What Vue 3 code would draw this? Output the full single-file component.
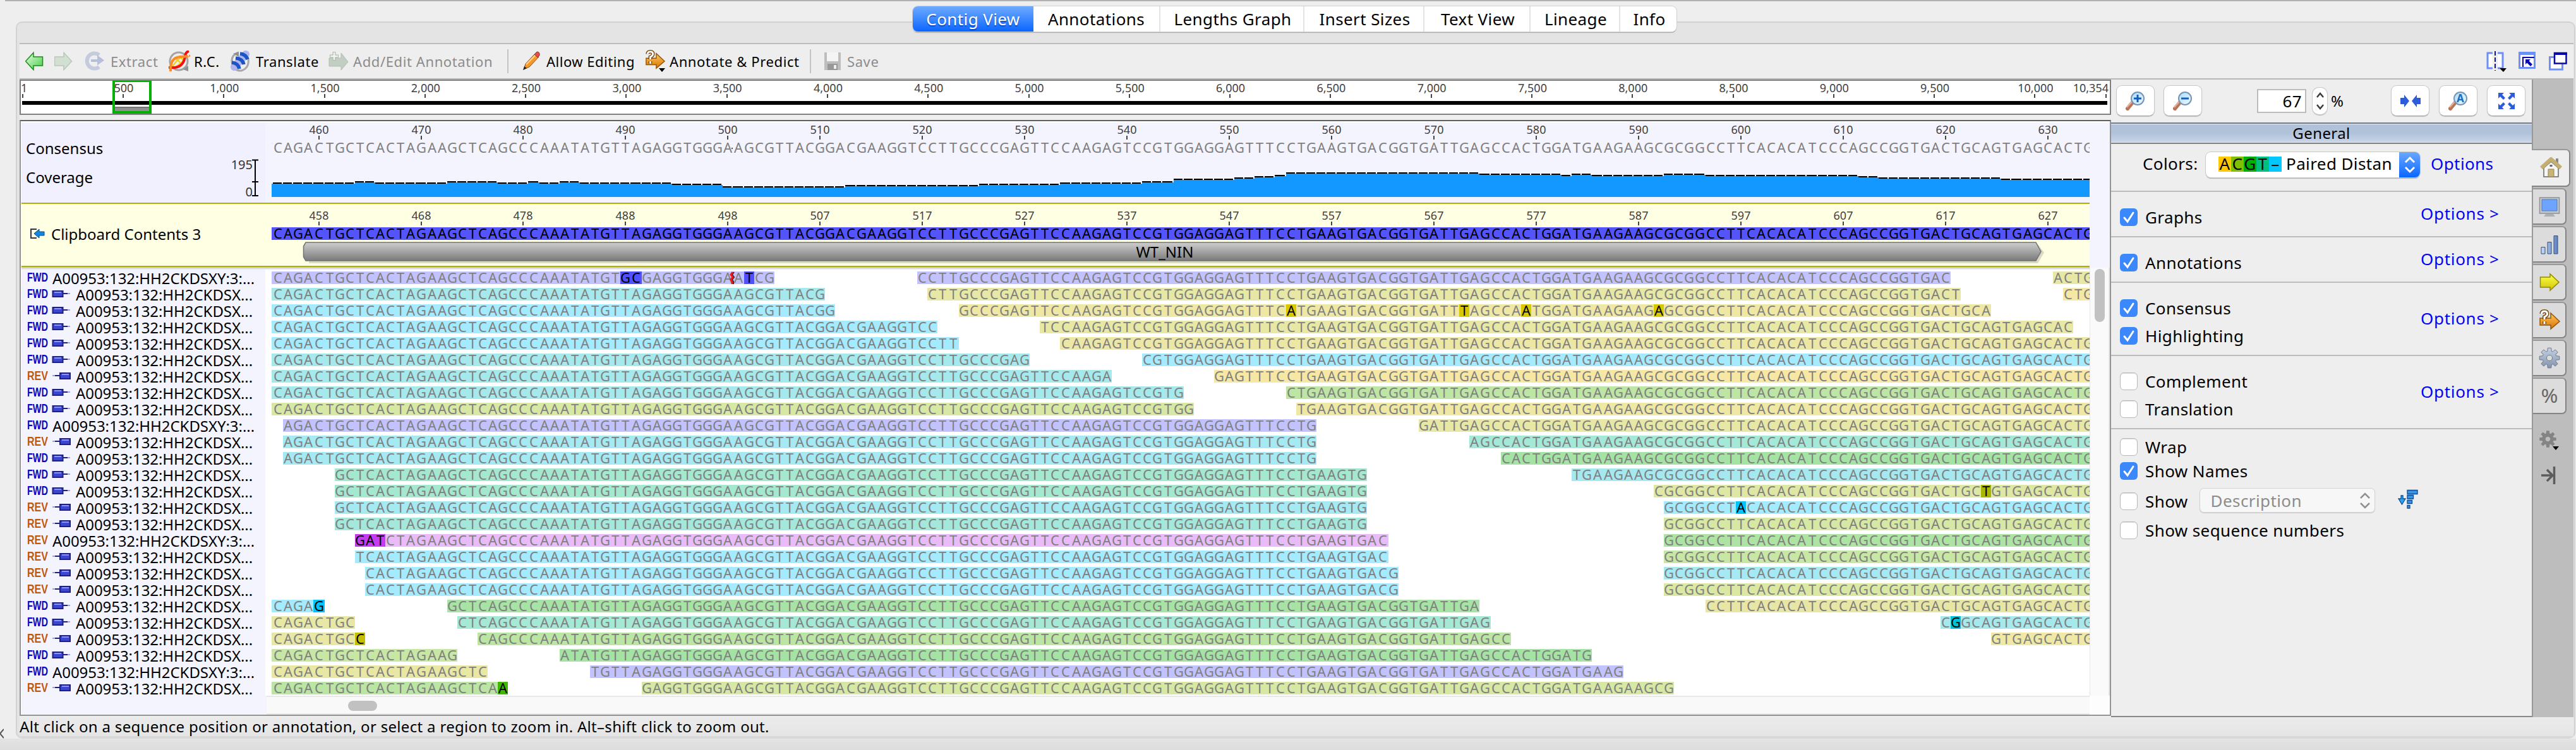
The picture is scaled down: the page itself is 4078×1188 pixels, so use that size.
<script setup>
const tabs = [
  ['Contig View', 191], ['Annotations', 199], ['Lengths Graph', 228], ['Insert Sizes', 190],
  ['Text View', 168], ['Lineage', 142], ['Info', 91],
]

// Alignment columns snap to a two pixel grid
const colX = (k) => 2 * Math.floor(216.59 + 8.096 * k)
const bases =
  'CAGACTGCTCACTAGAAGCTCAGCCCAAATATGTTAGAGGTGGGAAGCGTTACGGACGAAGGTCCTTGCCCGAGTTCCAAGAGTCCGTGGAGGAGTTTCCTGAAGTGACGGTGATTGAGCCACTGGATGAAGAAGCGCGGCCTTCACACATCCCAGCCGGTGACTGCAGTGAGCACTG'
const baseAt = (k) => (k < 0 ? 'T' : bases[k])
const END = 178

function makeRead([from, to, color, edits = '', editColor = '']) {
  const changed = {}
  edits.split(' ').filter(Boolean).forEach((e) => { changed[+e.slice(1)] = e[0] })
  const marks = []
  const runs = []
  let run = null
  for (let k = from; k < to; k++) {
    const mid = (colX(k) + colX(k + 1)) / 2
    if (changed[k]) {
      marks.push({ x: colX(k), w: colX(k + 1) - colX(k), mid, ch: changed[k], fill: editColor })
      run = null
    } else {
      if (!run) {
        run = { key: k, text: '', xs: '' }
        runs.push(run)
      }
      run.text += baseAt(k)
      run.xs += mid + ' '
    }
  }
  return { x: colX(from), w: colX(to) - colX(from), color, runs, marks }
}

const full = makeRead([-1, END, '#5454fc']).runs[0]
const V = '#c2c2ff', T = '#a5e9ed', C = '#a4ebff', B = '#a5e9f3', Y = '#e7e8a5'
const rows = [
  ['F', 0, [[-1, 49, V, 'G34 C35 T46', '#5050ff'], [63, 164, V], [174, END, Y]]],
  ['F', 1, [[-1, 54, T], [64, 165, Y], [175, END, '#f5e8a4']]],
  ['F', 1, [[-1, 55, C], [67, 168, '#eee8a4', 'A99 T116 A122 A135', '#d8c800']]],
  ['F', 1, [[-1, 65, C], [75, 176, Y]]],
  ['F', 1, [[-1, 67, C], [77, END, '#ece7a4']]],
  ['F', 1, [[-1, 74, T], [85, END, C]]],
  ['R', 1, [[-1, 82, T], [92, END, '#f6e8a4']]],
  ['F', 1, [[-1, 89, T], [99, END, '#bde5a3']]],
  ['F', 1, [[-1, 90, '#d7e8a4'], [100, END, '#eee8a4']]],
  ['F', 0, [[1, 102, V], [112, END, Y]]],
  ['R', 1, [[1, 102, B], [117, END, '#a4e8d8']]],
  ['F', 1, [[1, 102, B], [120, END, '#a5e3a4']]],
  ['F', 1, [[6, 107, '#a4e8d0'], [127, END, '#a5e8ef']]],
  ['F', 1, [[6, 107, '#a4e8d0'], [135, END, '#dee8a4', 'T167', '#a8b800']]],
  ['R', 1, [[6, 107, B], [136, END, C, 'A143', '#00c4ff']]],
  ['R', 1, [[6, 107, '#a4e8dc'], [136, END, '#d7e8a4']]],
  ['R', 0, [[8, 109, '#e9bcf9', 'G8 A9 T10', '#c43cf0'], [136, END, '#aee4a3']]],
  ['R', 1, [[8, 109, C], [136, END, '#c8e7a4']]],
  ['R', 1, [[9, 110, C], [136, END, '#a5e9f5']]],
  ['R', 1, [[9, 110, C], [136, END, '#dbe8a4']]],
  ['F', 1, [[-1, 5, C, 'G4', '#00c4ff'], [17, 118, '#a7e3a4'], [140, END, '#e8e6a4']]],
  ['F', 1, [[-1, 8, Y], [18, 119, '#a4e8d5'], [163, END, '#a5e9ed', 'G164', '#00c0d8']]],
  ['R', 1, [[-1, 9, '#e8e7a4', 'C8', '#c4bf00'], [20, 121, '#bbe5a3'], [168, END, '#efe9a5']]],
  ['F', 1, [[-1, 18, '#c7e7a4'], [28, 129, '#a5e3a4']]],
  ['F', 0, [[-1, 21, '#e8e8a4'], [31, 132, V]]],
  ['R', 1, [[-1, 23, '#bae5a3', 'A22', '#40b800'], [36, 137, '#d7e8a4']]],
].map(([dir, paired, reads], i) => ({
  dir: dir === 'F' ? 'FWD' : 'REV', paired, y: 430 + i * 26, reads: reads.map(makeRead),
}))

const rulerTicks = []
for (let p = 460; p <= 630; p += 10) {
  const k = p <= 500 ? p - 456 : p - 457
  rulerTicks.push({ x: (colX(k) + colX(k + 1)) / 2, a: p, b: p <= 500 ? p - 2 : p - 3 })
}

const steps = [
  [-1, 289], [8, 287], [10, 289], [17, 287], [22, 289], [25, 287], [26, 289], [28, 287], [30, 289], [39, 291],
  [44, 295], [56, 293], [69, 291], [77, 289], [85, 287], [88, 283], [94, 281], [96, 279], [98, 277], [99, 273],
  [118, 275], [126, 277], [127, 275], [129, 277], [136, 275], [140, 277], [155, 279], [157, 281], [169, 283],
]
const coverage = []
for (let k = -1; k < END; k++) {
  const y = steps.filter((s) => s[0] <= k).pop()[1]
  coverage.push({ x: colX(k), w: colX(k + 1) - colX(k), y })
}

const mapX = (n) => 36 + (n - 1) * 0.31857
const mapTicks = []
for (let n = 500; n <= 10000; n += 500) mapTicks.push({ x: mapX(n), label: n.toLocaleString('en-US') })

const gear = (() => {
  const p = []
  for (let i = 0; i < 8; i++) {
    const a = (i * Math.PI) / 4
    ;[[-0.3, 11], [-0.17, 16], [0.17, 16], [0.3, 11]].forEach(([d, r]) =>
      p.push(`${(16 + r * Math.sin(a + d)).toFixed(1)},${(16 - r * Math.cos(a + d)).toFixed(1)}`))
  }
  return `M${p.join('L')}ZM16 11.5a4.5 4.5 0 1 0 .01 0Z`
})()

const sections = [
  { h: 72, top: 26, opt: 20, items: [['Graphs', 1, 0]] },
  { h: 72, top: 26, opt: 20, items: [['Annotations', 1, 0]] },
  { h: 116, top: 26, opt: 42, items: [['Consensus', 1, 0], ['Highlighting', 1, 16]] },
  { h: 116, top: 26, opt: 42, items: [['Complement', 0, 0], ['Translation', 0, 16]] },
  { h: 454, top: 14, opt: 0, items: [['Wrap', 0, 0], ['Show Names', 1, 10], ['Show', 0, 20], ['Show sequence numbers', 0, 18]] },
]
const sideTabs = ['screen', 'bars', 'arrow', 'predict', 'gear', 'percent']
</script>

<template>
  <div class="app">
    <svg width="0" height="0" class="defs">
      <defs>
        <linearGradient id="gGreen" x1="0" y1="0" x2="1" y2="1"><stop offset="0" stop-color="#e8ffe4" /><stop offset="1" stop-color="#48cc48" /></linearGradient>
        <linearGradient id="gOrange" x1="0" y1="0" x2="0" y2="1"><stop offset="0" stop-color="#ffc860" /><stop offset="1" stop-color="#d87400" /></linearGradient>
        <linearGradient id="gBar" x1="0" y1="0" x2="0" y2="1"><stop offset="0" stop-color="#cecece" /><stop offset="1" stop-color="#7a7a7a" /></linearGradient>
        <linearGradient id="gLens" x1="0" y1="0" x2="1" y2="1"><stop offset="0" stop-color="#a8dcfc" /><stop offset="1" stop-color="#eefaff" /></linearGradient>
        <linearGradient id="gYellow" x1="0" y1="0" x2="0" y2="1"><stop offset="0" stop-color="#ffff50" /><stop offset="1" stop-color="#d0c400" /></linearGradient>
        <linearGradient id="gGear" x1="0" y1="0" x2="0" y2="1"><stop offset="0" stop-color="#c4d2e4" /><stop offset="1" stop-color="#8492ac" /></linearGradient>
        <linearGradient id="gBlue" x1="0" y1="0" x2="1" y2="0"><stop offset="0" stop-color="#c4dcfa" /><stop offset="1" stop-color="#5c84c4" /></linearGradient>
        <symbol id="predict" viewBox="0 0 34 34">
          <path d="M2 14H19V6L33 19L19 31V25H2Z" fill="url(#gOrange)" stroke="#96560a" stroke-width="1.5" />
          <path d="M4.500 7q0-4 4.500-4t4.500 4q0 3-4.500 5v4M9 19v4" fill="none" stroke="#7a4a10" stroke-width="6" />
          <path d="M4.500 7q0-4 4.500-4t4.500 4q0 3-4.500 5v4M9 19v4" fill="none" stroke="#fff" stroke-width="3" />
        </symbol>
        <symbol id="lens" viewBox="0 0 32 32">
          <path d="M12 17L3 28" stroke="#b8745a" stroke-width="6" stroke-linecap="round" />
          <path d="M11 16L2 26" stroke="#e6b49a" stroke-width="2" />
          <circle cx="19" cy="12" r="10" fill="url(#gLens)" stroke="#7894b4" stroke-width="2" />
        </symbol>
      </defs>
    </svg>

    <div class="topline"></div>
    <nav class="tabs">
      <div v-for="([name, w], i) in tabs" :key="name" class="tab" :class="{ active: i === 0 }" :style="{ width: w + 'px' }">{{ name }}</div>
    </nav>

    <main class="frame">
      <div class="strip"></div>
      <div class="toolbar">
        <svg class="tool" width="46" height="32" viewBox="40 82 46 32"><path d="M40.500 98L53 84.500V91H67.500V105H53V111.500Z" fill="url(#gGreen)" stroke="#169016" stroke-width="1.500" /></svg>
        <svg class="tool" width="48" height="32" viewBox="86 82 48 32"><path d="M113.500 98L101 84.500V91H86.500V105H101V111.500Z" fill="#d4dfd4" stroke="#b8c8b8" stroke-width="1.500" /></svg>
        <div class="tool off" style="width: 132px">
          <svg width="41" height="32" viewBox="134 82 41 32"><path d="M157 88A12 12 0 1 0 157 107" fill="none" stroke="#c4cbdc" stroke-width="6" /><path d="M144 95H154V88.500L165 96.500L154 104.500V99H144Z" fill="#b4c0d8" /></svg>Extract
        </div>
        <div class="tool" style="width: 98px">
          <svg width="41" height="34" viewBox="265 81 41 34"><circle cx="282" cy="98" r="14" fill="none" stroke="#a4a4a4" stroke-width="3" /><path d="M289 111l8-6v9Z" fill="#909090" /><path d="M271 107L281 95L293 89M274 110L290 97M277 93l9 9M283 90l8 8" stroke="#f4d020" stroke-width="2.500" fill="none" /><path d="M266 108H276Q290 106 292 90Q293 83 298 82" fill="none" stroke="#f01010" stroke-width="4" /><path d="M269 114Q268 92 284 91T298 89" fill="none" stroke="#fa8c28" stroke-width="4" /></svg>R.C.
        </div>
        <div class="tool" style="width: 156px">
          <svg width="41" height="34" viewBox="364 81 41 34"><path d="M378 84Q366 88 367 99Q368 113 382 113Q395 109 393 94L390 88" fill="none" stroke="#a8a8a8" stroke-width="3" /><path d="M369 86l9-3v8Z" fill="#909090" /><path d="M371 107L389 87" stroke="#b0b4ec" stroke-width="12" stroke-linecap="round" /><path d="M367 100q10 1 12 10M373 93q11 1 13 10M380 86q9 1 12 9" stroke="#1c54c8" stroke-width="5.500" fill="none" /></svg>Translate
        </div>
        <div class="tool off" style="width: 283px">
          <svg width="39" height="34" viewBox="520 81 39 34"><path d="M521 93H540V85L551 99L540 112V106H521Z" fill="#c2cec2" stroke="#b2beb2" /><path d="M529 83V97M522 90H536" stroke="#aebaae" stroke-width="5" /><path d="M529 84V96M523 90H535" stroke="#f4f6f4" stroke-width="2.500" /></svg>Add/Edit Annotation
        </div>
        <div class="sep"></div>
        <div class="tool pencil" style="width: 194px">
          <svg width="38" height="34" viewBox="828 81 38 34"><path d="M830 111l3-9 15-16 6 5-15 16Z" fill="#f49828" stroke="#984818" /><path d="M834 103L849 88" stroke="#ffd890" stroke-width="2" /><path d="M847 87l4-4q5 0 4 6l-3 3Z" fill="#e05048" stroke="#983028" /><path d="M829 112l2-6 4 3Z" fill="#222" /></svg>Allow Editing
        </div>
        <div class="tool" style="width: 261px">
          <svg width="39" height="36" viewBox="1022 80 39 36"><use href="#predict" x="1021" y="80" width="34" height="32" /><path d="M1044 109h10l-5 6Z" /></svg>Annotate &amp; Predict
        </div>
        <div class="sep"></div>
        <div class="tool off save">
          <svg width="37" height="34" viewBox="1306 81 37 34"><path d="M1307 84H1333V112H1307Z" fill="#bdbdbd" /><path d="M1311 84H1329V98H1311Z" fill="#f4f4f4" /><path d="M1312 102H1328V112H1312Z" fill="#989898" /><path d="M1322 104h4v6h-4Z" fill="#eee" /></svg>Save
        </div>
        <svg class="winicons" width="132" height="36" viewBox="3934 80 132 36">
          <path d="M3937 85H3961V109H3937Z" fill="#fff" stroke="#6c90f8" stroke-width="3" /><path d="M3949 82V113" stroke="#eee" stroke-width="8" /><path d="M3949 82V113" stroke="#1010b0" stroke-width="2" stroke-dasharray="7 3" /><path d="M3956 109h11l-5 6Z" />
          <path d="M3987.500 84.500H4011.500V108.500H3987.500Z" fill="#fff" stroke="#6c90f8" stroke-width="3" /><path d="M3986 83H4013V88H3986Z" fill="#6c90f8" /><path d="M3993 107V92H4011" fill="none" stroke="#0808b0" stroke-width="2" /><path d="M3997 95H4005L4002.500 97.500L4008 103L4005 106L3999.500 100.500L3997 103Z" fill="#0808b0" />
          <path d="M4035.500 91.500H4055.500V111H4035.500Z" fill="#fff" stroke="#6c90f8" stroke-width="3" /><path d="M4043 85H4061.500V101.500H4043Z" fill="#fff" stroke="#0808b0" stroke-width="2.500" /><path d="M4042 84H4063V88H4042Z" fill="#0808b0" />
        </svg>
      </div>

      <div class="body">
        <section class="viewer">
          <svg class="overview" width="3307" height="52" viewBox="33 128 3307 52">
            <g class="num"><text x="33" y="146">1</text><text v-for="t in mapTicks" :key="t.label" :x="t.x + 1" y="146" text-anchor="middle">{{ t.label }}</text><text x="3338" y="146" text-anchor="end">10,354</text></g>
            <rect x="35" y="149" width="2" height="6" fill="#444" /><rect x="3333" y="149" width="2" height="6" fill="#444" />
            <rect v-for="t in mapTicks" :key="t.x" :x="Math.round(t.x) - 1" y="149" width="2" height="6" fill="#444" />
            <rect x="35" y="160" width="3301" height="6" />
            <rect x="182" y="169" width="54" height="7" fill="#909090" /><rect x="182" y="169" width="54" height="2" fill="#747474" />
            <path d="M178 128H240V180H178ZM182 130V176H236V130Z" fill="#00b000" fill-rule="evenodd" />
          </svg>

          <div class="alignment">
            <div class="tracks">
              <div class="panel consensus">
                <div class="names">
                  <svg width="385" height="127" viewBox="34 194 385 127" class="label">
                    <text x="41" y="244">Consensus</text><text x="41" y="290">Coverage</text>
                    <g font-size="20"><text x="400" y="268" text-anchor="end" fill="#333">195</text><text x="400" y="311" text-anchor="end" fill="#333">0</text></g>
                    <path d="M399 253.500H409M404 253V311M399 288H409M399 310H409" fill="none" stroke="#000" stroke-width="2" />
                  </svg>
                </div>
                <svg class="seq" width="2878" height="127" viewBox="430 194 2878 127">
                  <g class="num"><text v-for="t in rulerTicks" :key="t.a" :x="t.x" y="212">{{ t.a }}</text></g>
                  <rect v-for="t in rulerTicks" :key="t.x" :x="t.x - 1" y="215" width="2" height="6" fill="#444" />
                  <text :x="full.xs" y="242">{{ full.text }}</text>
                  <circle cx="1159" cy="235" r="1.200" fill="#555" />
                  <g v-for="c in coverage" :key="c.x"><rect :x="c.x" :y="c.y" :width="c.w - 2" height="2" fill="#000" /><rect :x="c.x" :y="c.y + 2" :width="c.w" :height="310 - c.y" fill="#1298ff" shape-rendering="crispEdges" /></g>
                </svg>
              </div>
              <div class="panel reference">
                <div class="names">
                  <svg width="385" height="98" viewBox="34 323 385 98" class="label">
                    <path d="M58 363H49V377H58" fill="none" stroke="#334" stroke-width="2" /><path d="M54 370L62 363V367H70V373H62V377Z" fill="#1088e0" stroke="#064a90" />
                    <text x="81" y="380">Clipboard Contents 3</text>
                  </svg>
                </div>
                <svg class="seq" width="2878" height="98" viewBox="430 323 2878 98">
                  <g class="num"><text v-for="t in rulerTicks" :key="t.b" :x="t.x" y="348">{{ t.b }}</text></g>
                  <rect v-for="t in rulerTicks" :key="t.x" :x="t.x - 1" y="351" width="2" height="6" fill="#444" />
                  <rect x="430" y="360" width="2878" height="20" fill="#5454fc" />
                  <text :x="full.xs" y="378" class="ink">{{ full.text }}</text>
                  <path d="M489 387H3226L3236 400L3226 417H489Z" fill="#000" opacity=".14" />
                  <path d="M484 384H3223L3231 398.500L3223 413H484L480.500 407V390Z" fill="url(#gBar)" stroke="#727272" stroke-width="1.500" />
                  <text x="1844" y="408" class="ink wt">WT_NIN</text>
                </svg>
              </div>
              <div class="shade"></div>
              <div class="panel reads">
                <div class="names">
                  <div v-for="r in rows" :key="r.y" class="name">
                    <svg :width="r.paired ? 78 : 41" height="26" :viewBox="r.paired ? '42 0 78 26' : '42 0 41 26'">
                      <text x="43" y="16" textLength="33" lengthAdjust="spacingAndGlyphs" class="dir" :class="r.dir">{{ r.dir }}</text>
                      <template v-if="r.paired">
                        <g v-if="r.dir === 'FWD'"><rect x="83.500" y="5" width="16" height="9" fill="#3c46d0" stroke="#20207c" stroke-width="2" /><path d="M86 7H97" stroke="#8c98f0" stroke-width="2" /><path d="M100 9H107" stroke="#20207c" stroke-width="2" /><path d="M107 9H111" stroke="#a0a4d4" stroke-width="2" /></g>
                        <g v-else><rect x="95" y="5" width="16" height="9" fill="#3c46d0" stroke="#20207c" stroke-width="2" /><path d="M98 7H109" stroke="#8c98f0" stroke-width="2" /><path d="M87 9H94" stroke="#20207c" stroke-width="2" /><path d="M83 9H87" stroke="#a0a4d4" stroke-width="2" /></g>
                      </template>
                    </svg>
                    <span>{{ r.paired ? 'A00953:132:HH2CKDSX...' : 'A00953:132:HH2CKDSXY:3:...' }}</span>
                  </div>
                </div>
                <svg class="seq" width="2878" height="675" viewBox="430 427 2878 675">
                  <g v-for="r in rows" :key="r.y">
                    <g v-for="d in r.reads" :key="d.x">
                      <rect :x="d.x" :y="r.y" :width="d.w" height="20" :fill="d.color" />
                      <text v-for="s in d.runs" :key="s.key" :x="s.xs" :y="r.y + 18">{{ s.text }}</text>
                      <g v-for="m in d.marks" :key="m.x"><rect :x="m.x" :y="r.y" :width="m.w" height="20" :fill="m.fill" /><text :x="m.mid" :y="r.y + 18" class="ink">{{ m.ch }}</text></g>
                    </g>
                  </g>
                  <path d="M1162 431l-3 4 3 4-3 4 2 3v4" fill="none" stroke="#222" stroke-width="2" /><path d="M1160 431l-3 4 3 4-3 4 2 3v4" fill="none" stroke="#f01818" stroke-width="3" />
                </svg>
              </div>
              <div class="hscroll"><div class="hpad"></div><div class="htrack"><div class="hthumb"></div></div></div>
            </div>
            <div class="edge"><div class="edgetop"></div><div class="vtrack"><div class="vthumb"></div></div><div class="corner"></div></div>
          </div>
        </section>

        <aside class="side">
          <div class="zoombar">
            <div class="btn"><svg width="32" height="32" viewBox="0 0 32 32"><use href="#lens" width="32" height="32" /><path d="M13 12H25M19 6V18" stroke="#1460b8" stroke-width="3" /></svg></div>
            <div class="btn second"><svg width="32" height="32" viewBox="0 0 32 32"><use href="#lens" width="32" height="32" /><path d="M13 12H25" stroke="#1460b8" stroke-width="3" /></svg></div>
            <div class="field">67</div>
            <div class="spin"><svg width="24" height="42" viewBox="0 0 24 42"><path d="M7 15l5-6 5 6M7 27l5 6 5-6" fill="none" stroke="#3c3c3c" stroke-width="2.500" /></svg></div>
            <div class="pct">%</div>
            <div class="btn"><svg width="32" height="32" viewBox="0 0 32 32"><path d="M0 11H6V6L14 16L6 26V21H0ZM32 11H26V6L18 16L26 26V21H32Z" fill="#2c5cd8" /></svg></div>
            <div class="btn gap"><svg width="32" height="32" viewBox="0 0 32 32"><use href="#lens" width="32" height="32" /><text x="19" y="18" font-size="17" font-weight="700" fill="#1c6cc0" text-anchor="middle">A</text></svg></div>
            <div class="btn gap"><svg width="32" height="32" viewBox="0 0 32 32"><path d="M3 12V3H12L9 6L14 11L11 14L6 9ZM20 3H29V12L26 9L21 14L18 11L23 6ZM29 20V29H20L23 26L18 21L21 18L26 23ZM12 29H3V20L6 23L11 18L14 21L9 26Z" fill="#2c5cd8" /></svg></div>
          </div>
          <div class="heading">General</div>
          <div class="colors">
            <span class="clabel">Colors:</span>
            <div class="select">
              <div class="swatches"><span class="a">A</span><span class="c">C</span><span class="g">G</span><span class="t">T</span><span class="d">–</span></div>
              <span class="dist">Paired Distance</span>
              <div class="stepper"><svg width="33" height="40" viewBox="0 0 33 40"><path d="M10 16l7-7 7 7M10 24l7 7 7-7" fill="none" stroke="#fff" stroke-width="3" /></svg></div>
            </div>
            <span class="link">Options</span>
          </div>
          <div v-for="(s, i) in sections" :key="i" class="section" :style="{ height: s.h + 'px', paddingTop: s.top + 'px' }">
            <div class="items">
              <div v-for="[label, on, gap] in s.items" :key="label" class="item" :style="{ marginTop: gap + 'px' }">
                <span class="box" :class="{ on }"><svg v-if="on" width="28" height="28" viewBox="0 0 28 28"><path d="M7 15l5 6 9-14" fill="none" stroke="#fff" stroke-width="3" stroke-linecap="round" /></svg></span>
                <span>{{ label }}</span>
                <template v-if="label === 'Show'">
                  <div class="desc">Description<svg width="18" height="26" viewBox="0 0 18 26"><path d="M2 9l7-7 7 7M2 17l7 7 7-7" fill="none" stroke="#909090" stroke-width="2.500" /></svg></div>
                  <svg class="sort" width="34" height="32" viewBox="0 0 34 32"><g fill="#3c94e4" stroke="#0c4c90" stroke-width="1.300"><path d="M15 1.500H31V7.500H15ZM15 9.500H24.500V15H15ZM15 17.500H22.500V22.500H15ZM15 25.500H19V30H15Z" /><path d="M5 10H8V15H12L6.500 24L1 15H5Z" fill="#2ca4f0" /></g></svg>
                </template>
              </div>
            </div>
            <span v-if="s.opt" class="link" :style="{ marginTop: s.opt - s.top + 'px' }">Options &gt;</span>
          </div>
        </aside>

        <div class="rail">
          <div class="rtab home"><svg width="36" height="34" viewBox="0 0 36 34"><path d="M25 2H29V12H25Z" fill="#888" /><path d="M6 17V31H29V17L17.500 7Z" fill="#f6f6f6" stroke="#666" stroke-width="1.500" /><path d="M2 17L17.500 3L33 17" fill="none" stroke="#c4ae70" stroke-width="6" /><path d="M13 19H22V31H13Z" fill="#c8b478" stroke="#96824c" /><path d="M15.500 12H19.500V15H15.500Z" fill="#666" /></svg></div>
          <div v-for="t in sideTabs" :key="t" class="rtab">
            <svg width="34" height="34" viewBox="0 0 34 34">
              <template v-if="t === 'screen'"><path d="M1.500 3H32.500V28H1.500Z" fill="#c4c8cc" stroke="#8c9094" stroke-width="1.500" /><path d="M5 6H29V24H5Z" fill="#6ca4ff" stroke="#5078b8" /><path d="M11 29H23L26 33H8Z" fill="#acb0b4" /></template>
              <g v-else-if="t === 'bars'" fill="url(#gBlue)" stroke="#385078"><path d="M4 21.500H10V32H4ZM14 13.500H20V32H14ZM24 3.500H30V32H24Z" /></g>
              <path v-else-if="t === 'arrow'" d="M2.500 9H18V4L32 17L18 30V25H2.500Z" fill="url(#gYellow)" stroke="#908800" stroke-width="1.500" />
              <use v-else-if="t === 'predict'" href="#predict" width="34" height="34" />
              <path v-else-if="t === 'gear'" :d="gear" transform="translate(1 1)" fill="url(#gGear)" stroke="#6c7890" fill-rule="evenodd" />
              <text v-else x="17" y="28" font-size="31" text-anchor="middle" fill="#686868" textLength="27" lengthAdjust="spacingAndGlyphs">%</text>
            </svg>
          </div>
          <svg class="tail" width="40" height="100" viewBox="0 0 40 100"><path :d="gear" transform="translate(4 8) scale(.84)" fill="#848484" fill-rule="evenodd" /><path d="M25 33h10l-5 6Z" /><path d="M7 79H25M16 70L25 79L16 88" fill="none" stroke="#5c5c5c" stroke-width="3.500" /><path d="M27.500 65V93" stroke="#5c5c5c" stroke-width="3.500" /></svg>
        </div>
      </div>
      <div class="status">Alt click on a sequence position or annotation, or select a region to zoom in. Alt–shift click to zoom out.</div>
    </main>
    <div class="bottom"><svg width="6" height="16" viewBox="0 0 6 16"><path d="M6 1L0 8L6 15" fill="none" stroke="#555" stroke-width="2" /></svg></div>
  </div>
</template>

<style>
body { margin: 0; }
</style>

<style scoped>
.app { width: 4078px; height: 1188px; overflow: hidden; background: #eee; font-family: "Noto Sans", "Open Sans", sans-serif; font-size: 26px; color: #000; display: flex; flex-direction: column; }
.app * { box-sizing: border-box; }
.defs { position: absolute; }
svg { display: block; flex: none; }
.topline { height: 2px; margin-left: 8px; background: #b0b0b0; flex: none; }
.tabs { position: relative; z-index: 1; display: flex; height: 40px; width: 1209px; margin: 8px 0 -16px 1445px; background: #fff; border-radius: 8px; box-shadow: 0 0 0 1px #cfcfcf, 0 2px 1px #a8a8a8; flex: none; overflow: hidden; }
.tab { height: 40px; line-height: 40px; text-align: center; letter-spacing: .4px; border-left: 2px solid #e4e4e4; padding-left: 3px; flex: none; }
.tab.active { border: 0; padding: 0; color: #fff; background: linear-gradient(#6fabff, #0a66ff); text-shadow: 0 2px 1px rgba(0, 30, 120, .5); }
.tab:nth-child(2) { border: 0; padding-left: 0; }
.frame { margin-left: 25px; width: 4052px; height: 1136px; border: 2px solid #d2d2d2; border-bottom: 4px solid #d8d8d8; border-radius: 10px; background: #e4e4e4; padding: 0 1px 0 4px; flex: none; display: flex; flex-direction: column; }
.strip { height: 34px; border-bottom: 2px solid #bcbcbc; flex: none; }
.toolbar { height: 56px; background: #eee; border-bottom: 2px solid #b8b8b8; display: flex; align-items: center; padding-left: 9px; font-size: 22px; letter-spacing: .6px; flex: none; }
.tool { display: flex; align-items: center; white-space: nowrap; flex: none; }
.off { color: #8c8c8c; }
.sep { width: 2px; height: 38px; background: #c4c4c4; flex: none; }
.pencil { margin-left: 22px; letter-spacing: .5px; }
.save { margin-left: 20px; }
.winicons { margin-left: auto; margin-right: 7px; }
.body { display: flex; height: 1010px; background: #eee; flex: none; }
.viewer { width: 3311px; display: flex; flex-direction: column; flex: none; }
.overview { box-sizing: content-box !important; border: 2px solid #808080; background: #fff; margin-bottom: 8px; }
.num { font-size: 18px; }
.viewer .num text { fill: #404040; }
.seq .num text { font-size: 18px; }
.alignment { border: 2px solid #949494; border-top-color: #606060; padding: 2px 0 0 1px; background: #fff; display: flex; flex: none; height: 944px; }
.tracks { width: 3274px; flex: none; display: flex; flex-direction: column; }
.panel { display: flex; flex: none; }
.names { width: 386px; margin-right: 10px; flex: none; font-size: 24px; }
.label { font-size: 24px; }
.consensus { height: 127px; background: #f4f4ff; }
.consensus .names { background: #f0f0ff; }
.reference { height: 102px; background: #ffffe4; border: solid #b0b000; border-width: 2px 0; }
.shade { height: 4px; background: linear-gradient(#c4c4c8, #f0f0f4); flex: none; }
.reads { height: 675px; background: #fff; }
.reads .names { background: #f4f4ff; padding: 3px 0 0 8px; height: 675px; overflow: hidden; }
.name { display: flex; height: 26px; line-height: 22px; white-space: nowrap; letter-spacing: -.06px; }
.dir { font-family: "Liberation Sans", sans-serif; font-size: 20px; font-weight: 700; letter-spacing: 0; }
.FWD { fill: #0808c0; }
.REV { fill: #c05808; }
.seq { font-size: 22px; overflow: hidden; }
.seq text { text-anchor: middle; fill: #808080; }
.seq .ink { fill: #000; }
.seq .wt { font-size: 24px; }
.hscroll { height: 30px; display: flex; flex: none; }
.hpad { width: 388px; background: #f4f4ff; }
.htrack { flex: 1; background: #f9f9f9; border: solid #e8e8e8; border-width: 2px 0; padding: 6px 0 0 129px; }
.hthumb { width: 46px; height: 16px; border-radius: 8px; background: #c1c1c1; }
.edge { width: 32px; flex: none; display: flex; flex-direction: column; }
.edgetop { height: 230px; background: #f4f4ff; }
.vtrack { height: 678px; background: #fafafa; border: 1px solid #e8e8e8; border-width: 0 2px 0 1px; padding: 2px 0 0 7px; }
.vthumb { width: 16px; height: 84px; border-radius: 8px; background: #c1c1c1; }
.corner { height: 30px; background: #fdfdfd; }
.side { width: 666px; flex: none; display: flex; flex-direction: column; letter-spacing: .4px; border-bottom: 2px solid #888; }
.zoombar { height: 68px; display: flex; align-items: flex-start; padding: 9px 7px 0 8px; flex: none; }
.btn { width: 61px; height: 49px; border-radius: 9px; background: #fff; border: 1px solid #c8c8c8; border-bottom-color: #a4a4a4; box-shadow: 0 1px 1px #c4c4c4; display: flex; align-items: center; justify-content: center; flex: none; }
.second { margin: 0 87px 0 14px; }
.gap { margin-left: 15px; }
.field { width: 78px; height: 38px; margin-top: 6px; border: 2px solid #bcbcbc; background: #fff; text-align: right; line-height: 34px; padding-right: 5px; flex: none; }
.spin { width: 23px; height: 42px; margin: 4px 6px 0 10px; border-radius: 10px; background: #fff; box-shadow: 0 0 0 1px #c8c8c8, 0 2px 1px #bbb; flex: none; }
.pct { width: 95px; margin-top: 6px; line-height: 38px; flex: none; font-size: 24px; }
.heading { height: 34px; border-top: 2px solid #6c7a8a; border-bottom: 2px solid #808080; box-shadow: inset 0 1px #e8eef6, inset 0 -1px #e8eef6; background: linear-gradient(#b0c2da 50%, #cad6e8); text-align: center; line-height: 29px; font-size: 24px; flex: none; }
.colors { height: 76px; border-bottom: 2px solid #bcbcbc; display: flex; align-items: flex-start; padding: 13px 0 0 50px; line-height: 34px; flex: none; }
.clabel { width: 100px; line-height: 36px; }
.select { width: 339px; height: 40px; border-radius: 8px; background: #fff; box-shadow: 0 0 0 1px #c8c8c8, 0 2px 1px #b0b0b0; display: flex; overflow: hidden; padding-left: 20px; flex: none; }
.swatches { display: flex; height: 24px; margin-top: 7px; }
.swatches span { width: 20px; text-align: center; line-height: 22px; height: 24px; }
.a { background: #ffc800; }
.c { background: #80c000; }
.g { background: #00b000; }
.t { background: #00c080; }
.d { background: #00c8ff; }
.dist { width: 167px; margin-left: 7px; overflow: hidden; white-space: nowrap; line-height: 36px; margin-right: 12px; flex: none; }
.stepper { width: 33px; background: linear-gradient(#6ba8ff, #0a66ff); flex: none; }
.link { color: #0404f4; white-space: nowrap; }
.colors .link { margin-left: 17px; line-height: 36px; }
.section { display: flex; justify-content: space-between; padding-left: 14px; padding-right: 49px; line-height: 28px; border-bottom: 2px solid #bcbcbc; flex: none; }
.section .link { width: 127px; letter-spacing: .7px; }
.section:last-child { border: 0; }
.item { display: flex; height: 28px; white-space: nowrap; }
.box { width: 28px; height: 28px; border-radius: 6px; background: #fff; border: 1px solid #b8b8b8; box-shadow: inset 0 1px 1px #ddd; margin-right: 12px; flex: none; }
.box.on { background: #3b88fd; border: 0; box-shadow: none; }
.desc { width: 278px; height: 39px; margin: -7px 36px 0 18px; padding: 0 6px 0 17px; line-height: 38px; border-radius: 7px; background: #f7f7f7; border: 1px solid #d4d4d4; box-shadow: 0 1px 1px #ccc; color: #8c8c8c; display: flex; justify-content: space-between; align-items: center; }
.sort { margin-top: -5px; }
.rail { width: 66px; background: #bdbdbd; border-left: 2px solid #989898; padding-top: 110px; flex: none; }
.rtab { width: 53px; height: 58px; margin-bottom: 2px; background: #dcdcdc; border: 2px solid #848484; border-left: 0; border-top-color: #999; border-radius: 0 7px 7px 0; display: flex; align-items: center; justify-content: center; }
.rtab.home { width: 61px; height: 60px; background: #eee; margin-left: -2px; padding-left: 2px; }
.tail { margin: 18px 0 0 6px; }
.status { height: 30px; line-height: 30px; font-size: 24px; letter-spacing: .31px; background: linear-gradient(#ebebeb, #e5e5e5); white-space: nowrap; flex: none; }
.bottom { flex: 1; background: linear-gradient(#e4e4e4, #dcdcdc); }
.bottom svg { margin-top: -16px; }
</style>
